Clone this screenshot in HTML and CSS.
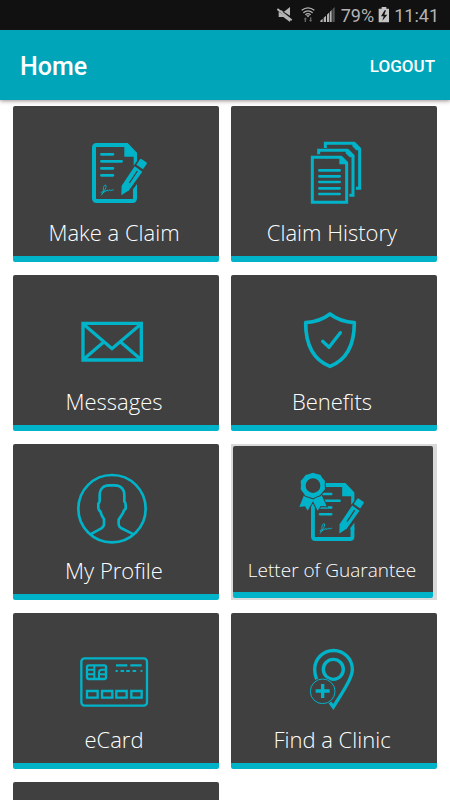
FILE: index.html
```
<!DOCTYPE html>
<html lang="en">
<head>
  <meta charset="UTF-8">
  <meta name="viewport" content="width=device-width, initial-scale=1.0">
  <title>Home</title>
  <link rel="stylesheet" href="styles.css">
</head>
<body>
  <div class="status-bar">
    <svg class="status-icon" width="60" height="18" viewBox="45 18 180 54" aria-hidden="true">
      <!-- muted speaker -->
      <path fill="#b4b4b4" d="M50 35h16l18-14v26L58 31zM50 35v16h14l20 15V56z"/>
      <path stroke="#b4b4b4" stroke-width="6" d="M46 27l43 34"/>
      <!-- wifi -->
      <g fill="none" stroke="#b4b4b4" stroke-width="4">
        <path d="M119 31q19-15 38 0M124 38q14-11 28 0M130 44q8-6 16 0"/>
      </g>
      <path fill="#b4b4b4" d="M132 46h12l-6 6z"/>
      <path fill="#666" d="M125 58l5-6 5 6h-3v8h-4v-8zM141 60l5 6 5-6h-3v-8h-4v8z"/>
      <!-- signal -->
      <path fill="#b4b4b4" d="M175 66v-4l7-6v10zM185 66V53l7-6v19zM195 66V44l7-7v29zM204 66V35l5-5v36z"/>
      <path fill="#555" d="M211 66V28l7-7v45z"/>
    </svg>
    <span>79%</span>
    <svg class="status-icon" width="12" height="18" viewBox="0 0 36 54" aria-hidden="true">
      <path fill="#c4c4c4" d="M11 3h14v5h8v41H2V8h9z"/>
      <path fill="#111" d="M20 13L9 31h8l-4 13 15-18h-9l5-13z"/>
    </svg>
    <span>11:41</span>
  </div>

  <header class="app-bar">
    <h1>Home</h1>
    <button type="button" class="logout">LOGOUT</button>
  </header>

  <main class="menu">
    <a href="#" class="tile">
      <svg class="icon" viewBox="198 102 300 252" aria-hidden="true">
        <g id="document">
          <path class="line" stroke-width="12" d="M378 135H290q-8 0-8 8v152q0 8 8 8h107q8 0 8-8v-27"/>
          <path class="solid" d="M373 129h10l28 29v25l-10 14v-27h-28zM411 252v22h-12v-6z"/>
          <path class="line" stroke-width="8" stroke-linecap="round" d="M304 163h35M304 184h61M304 205h35M304 226h35"/>
          <path class="solid" d="M424 177l15 10q3 2 1 5l-11 16-20-14 11-16q2-3 4-1z"/>
          <path class="solid outlined" d="M404 199l23 16-40 56-23 15 1-29z"/>
          <path class="gap" stroke-width="4" d="M412 213l-24 36"/>
          <path class="line" stroke-width="3" d="M304 286c6-10 16-21 14-30-7-4-10 12-7 19-8-2-9 5-4 4 6-2 10-7 16-9-1 5 3 3 7-1 0 4 5 2 11 0"/>
        </g>
      </svg>
      <span class="label">Make a Claim</span>
    </a>

    <a href="#" class="tile">
      <svg class="icon" viewBox="177 102 300 252" aria-hidden="true">
        <g class="line" stroke-width="9">
          <path d="M262 172h84l19 19v116H262z"/>
          <path d="M281 163v-12h85l18 18v117h-11"/>
          <path d="M301 144v-14h85l18 18v117h-11"/>
        </g>
        <path class="solid" d="M343 168h8l18 18v7h-26zM362 147h8l18 18v7h-14l-12-12zM382 126h8l18 18v7h-14l-12-12z"/>
        <path class="line" stroke-width="8" stroke-linecap="round" d="M283 211h61M283 229h61M283 246h61M283 265h61M283 282h61"/>
      </svg>
      <span class="label">Claim History</span>
    </a>

    <a href="#" class="tile">
      <svg class="icon" viewBox="198 99 300 252" aria-hidden="true">
        <g class="line" stroke-width="10">
          <path d="M249 160h175v110H249z"/>
          <path d="M249 161l87 75 88-75M249 269l65-55M424 269l-65-55"/>
        </g>
      </svg>
      <span class="label">Messages</span>
    </a>

    <a href="#" class="tile">
      <svg class="icon" viewBox="177 99 300 252" aria-hidden="true">
        <g class="line" stroke-width="11" stroke-linejoin="round" stroke-linecap="round">
          <path d="M315 132q30 23 73 26c0 65-20 110-73 131-53-21-73-66-73-131q43-3 73-26z"/>
          <path stroke-width="10" d="M293 214l19 18 34-44"/>
        </g>
      </svg>
      <span class="label">Benefits</span>
    </a>

    <a href="#" class="tile">
      <svg class="icon" viewBox="198 102 300 252" aria-hidden="true">
        <g class="line" stroke-width="8">
          <circle cx="336" cy="212" r="101"/>
          <path d="M271 289l33-18q8-5 8-13v-14q-8-12-11-24-6-4-6-11v-12q4-4 4-9v-16c0-20 12-30 28-30h17c18 0 29 11 29 30v18q4 4 4 10v12q-5 3-8 13l-13 20v14q0 7 7 11l38 19"/>
        </g>
      </svg>
      <span class="label">My Profile</span>
    </a>

    <div class="focused">
      <a href="#" class="tile">
        <svg class="icon" viewBox="174 108 300 252" aria-hidden="true">
          <use href="#document" transform="translate(-8 11) scale(.964)"/>
          <path class="rosette" d="M238 169l-15 38 17-2 8 13 16-28 14 28 9-14 18 1-17-38z"/>
          <path class="rosette" d="M264 104l11 4 11 2 6 10 8 9-1 13 1 12-8 9-7 9-11 4-10 5-11-4-12-4-6-9-8-10 1-12-1-13 8-9 7-9 11-3z"/>
          <circle class="hole" cx="264" cy="143" r="22"/>
        </svg>
        <span class="label label-small">Letter of Guarantee</span>
      </a>
    </div>

    <a href="#" class="tile">
      <svg class="icon" viewBox="198 105 300 252" aria-hidden="true">
        <g class="line" stroke-width="7">
          <rect x="244" y="157" width="197" height="142" rx="10"/>
          <rect x="261" y="178" width="57" height="41" rx="5"/>
          <path stroke-width="6" d="M261 191h23M261 205h23M283 178v41M318 191h-13q-8 0-8 8v20M298 205h20"/>
          <path d="M348 178h34M391 178h34"/>
          <path stroke-width="6" stroke-linecap="round" d="M349 195h2M364 195h6M381 195h6M400 195h6M424 195h1"/>
          <path d="M261 255h32v20h-32zM306 255h31v20h-31zM349 255h31v20h-31zM394 255h31v20h-31z"/>
        </g>
      </svg>
      <span class="label">eCard</span>
    </a>

    <a href="#" class="tile">
      <svg class="icon" viewBox="177 105 300 252" aria-hidden="true">
        <g class="line" stroke-width="10">
          <path d="M275 220q-6-14-6-30a56 56 0 0 1 113 0c0 13-4 22-10 34-13 28-32 54-47 79l-11-15"/>
          <circle cx="325" cy="190" r="30"/>
        </g>
        <circle class="hole" cx="293" cy="256" r="40"/>
        <circle class="line" cx="293" cy="256" r="37" stroke-width="3"/>
        <path class="line" stroke-width="10" d="M272 255h42M293 234v42"/>
      </svg>
      <span class="label">Find a Clinic</span>
    </a>

    <a href="#" class="tile" aria-label="More"></a>
  </main>
</body>
</html>
```

FILE: styles.css
```
* {
  box-sizing: border-box;
}
body {
  font-family: Roboto, sans-serif;
  background-color: #ffffff;
  margin: 0;
  display: flex;
  flex-direction: column;
  height: 100vh;
}
.status-bar {
  display: flex;
  flex: none;
  justify-content: flex-end;
  align-items: center;
  gap: 4px;
  height: 30px;
  padding-right: 11px;
  background-color: #111111;
  color: #b4b4b4;
  font-size: 18px;
}
.status-icon {
  display: block;
}
.app-bar {
  display: flex;
  flex: none;
  justify-content: space-between;
  align-items: center;
  height: 70px;
  padding: 2px 15px 0 20px;
  background-color: #00a5b9;
  color: #ffffff;
  box-shadow: 0 1px 4px rgba(60, 30, 30, 0.5);
  z-index: 1;
}
.app-bar h1 {
  margin: 0;
  font-size: 25px;
  font-weight: 500;
}
.logout {
  padding: 0;
  border: none;
  background: none;
  color: #ffffff;
  font-family: inherit;
  font-size: 17px;
  font-weight: 500;
  cursor: pointer;
}
.menu {
  display: grid;
  flex: 1;
  grid-template-columns: 1fr 1fr;
  grid-auto-rows: 156px;
  gap: 13px 12px;
  padding: 6px 13px 13px;
  overflow-y: auto;
  scrollbar-width: none;
}
.tile {
  display: flex;
  flex-direction: column;
  justify-content: space-between;
  align-items: center;
  height: 100%;
  padding: 28px 0 10px;
  border-bottom: 6px solid #00b3c8;
  border-radius: 2px;
  background-color: #404040;
  color: #ffffff;
  text-decoration: none;
}
.focused {
  padding: 2px 4px 2px 2px;
  background-color: #d9d9d9;
}
.focused .tile {
  padding-bottom: 12px;
}
.icon {
  flex: none;
  width: 100px;
  height: 84px;
  overflow: visible;
}
.line {
  fill: none;
  stroke: #00b3c8;
}
.solid {
  fill: #00b3c8;
}
.outlined {
  stroke: #404040;
  stroke-width: 6px;
  paint-order: stroke;
}
.gap {
  fill: none;
  stroke: #404040;
}
.hole {
  fill: #404040;
}
.rosette {
  fill: #00b3c8;
  stroke: #404040;
  stroke-width: 6px;
  paint-order: stroke;
}
.label {
  padding-right: 4px;
  font-family: "Open Sans", sans-serif;
  font-size: 22px;
  font-weight: 300;
  line-height: 28px;
}
.label-small {
  padding-right: 2px;
  font-size: 19px;
  line-height: 24px;
}
```
